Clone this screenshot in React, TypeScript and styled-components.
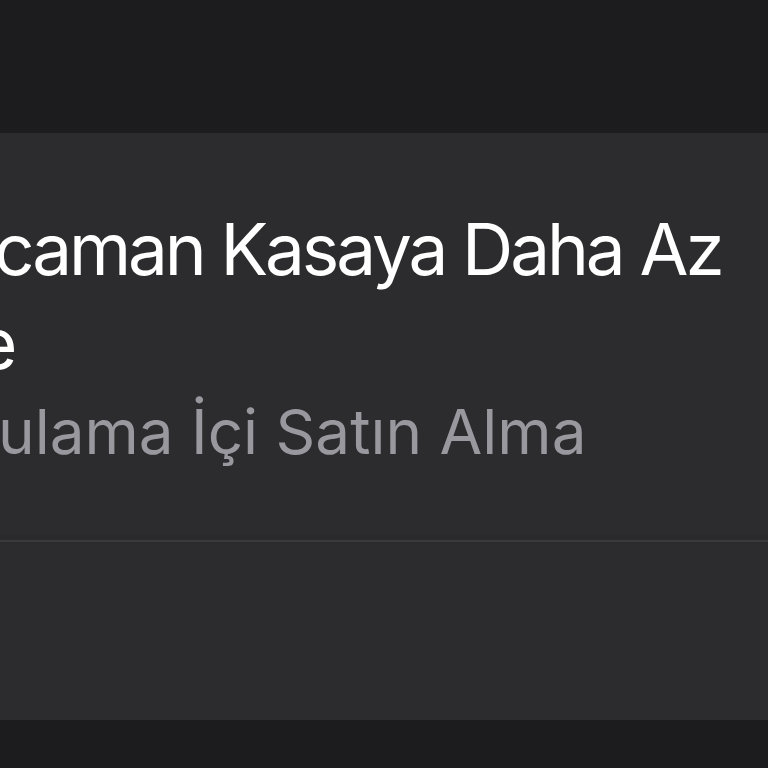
import React from "react";
import styled, { createGlobalStyle } from "styled-components";

const Global = createGlobalStyle`
  html, body {
    margin: 0;
    padding: 0;
    background: #1c1c1e;
    overflow: hidden;
  }
  #root {
    width: 768px;
    height: 768px;
  }
`;

const Screen = styled.div`
  width: 768px;
  height: 768px;
  display: flex;
  flex-direction: column;
  background: #1c1c1e;
  overflow: hidden;
  font-family: Inter, "Noto Sans", sans-serif;
`;

const TopBar = styled.div`
  height: 133px;
  flex: none;
  background: #1c1c1e;
`;

const Panel = styled.section`
  height: 587px;
  flex: none;
  background: #2c2c2e;
  display: flex;
  flex-direction: column;
`;

const Content = styled.div`
  padding-top: 69px;
  height: 407px;
  box-sizing: border-box;
  display: flex;
  flex-direction: column;
`;

const Title = styled.div<{ $shift: number }>`
  font-size: 71px;
  line-height: 94px;
  font-weight: 400;
  color: #ffffff;
  white-space: nowrap;
  margin-left: ${(p) => p.$shift}px;
  letter-spacing: -3.1px;
`;

const Subtitle = styled.div<{ $shift: number }>`
  margin-top: 5px;
  font-size: 62px;
  line-height: 74px;
  font-weight: 400;
  color: #98989e;
  white-space: nowrap;
  margin-left: ${(p) => p.$shift}px;
`;

const Divider = styled.div`
  height: 2px;
  background: #3a3a3c;
  box-shadow: 0 -3px 4px rgba(0, 0, 0, 0.12);
`;

const BottomBar = styled.div`
  flex: 1;
  background: #1c1c1e;
`;

export default function App() {
  return (
    <>
      <Global />
      <Screen>
        <TopBar />
        <Panel>
          <Content>
            <Title $shift={-6}>caman Kasaya Daha Az</Title>
            <Title $shift={-24}>e</Title>
            <Subtitle $shift={-2}>ulama İçi Satın Alma</Subtitle>
          </Content>
          <Divider />
        </Panel>
        <BottomBar />
      </Screen>
    </>
  );
}
